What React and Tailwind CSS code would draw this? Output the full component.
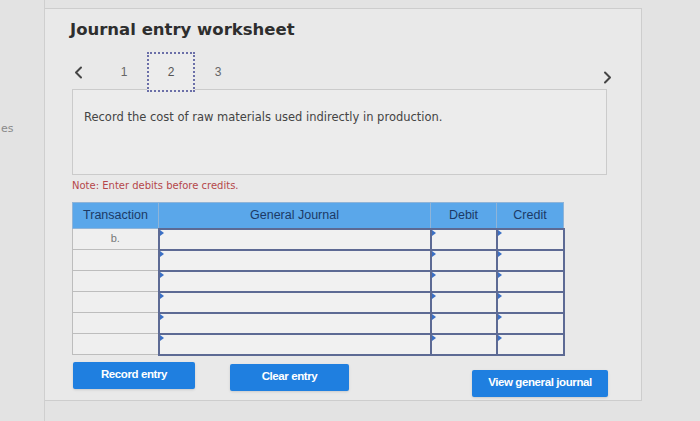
import React from 'react'

const ROWS = ['b.', '', '', '', '', '']

function Marker() {
  return (
    <span className="absolute left-0 top-0 w-0 h-0 border-t-[3px] border-b-[3px] border-l-[4px] border-t-transparent border-b-transparent border-l-[#3b6fc4]" />
  )
}

function EntryCell({ className = '' }) {
  return (
    <td className={`relative border-2 border-[#5d6a94] bg-[#f1f1f1] ${className}`}>
      <Marker />
    </td>
  )
}

function Btn({ children, className = '' }) {
  return (
    <button
      className={`h-[27px] bg-[#1f7fe0] rounded-[2px] text-white font-bold text-[11.5px] tracking-[-0.4px] shadow-sm ${className}`}
      style={{ fontFamily: '"Liberation Sans Narrow", "Liberation Sans", Arial, sans-serif' }}
    >
      {children}
    </button>
  )
}

function Chevron({ dir }) {
  return (
    <svg width="9" height="13" viewBox="0 0 9 13" fill="none" stroke="#454545" strokeWidth="2" strokeLinecap="round" strokeLinejoin="round">
      {dir === 'left' ? <path d="M7 1.5 L2 6.5 L7 11.5" /> : <path d="M2 1.5 L7 6.5 L2 11.5" />}
    </svg>
  )
}

export default function App() {
  return (
    <div className="w-[700px] h-[421px] bg-[#e3e3e3] flex overflow-hidden" style={{ fontFamily: '"DejaVu Sans", Verdana, sans-serif' }}>
      {/* left strip */}
      <div className="w-[45px] shrink-0 border-r border-[#cfcfcf] pt-[115px] pl-[1px]">
        <span className="text-[11px] text-[#8a8a8a]">es</span>
      </div>

      {/* worksheet panel */}
      <div className="mt-[8px] w-[597px] h-[393px] shrink-0 border-t border-r border-b border-[#cdcdcd] bg-[#e9e9e9] pl-[25px] pr-[20px] pt-[10px]">
        <h1 className="text-[16.5px] font-bold text-[#2e2e2e] leading-[22px]">Journal entry worksheet</h1>

        {/* step nav */}
        <div className="relative mt-[11px] flex items-center h-[40px] pr-[9px]">
          <div className="flex items-center -ml-[15px]">
            <span className="w-[46px] flex justify-center"><Chevron dir="left" /></span>
            <span className="w-[46px] text-center text-[12px] text-[#666]" style={{ fontFamily: '"Liberation Sans", Arial, sans-serif' }}>1</span>
            <span className="w-[48px] h-[40px] flex items-center justify-center text-[12px] text-[#555] border-2 border-dotted border-[#6b6fa8] bg-[#ececec] relative z-10" style={{ fontFamily: '"Liberation Sans", Arial, sans-serif' }}>2</span>
            <span className="w-[46px] text-center text-[12px] text-[#666]" style={{ fontFamily: '"Liberation Sans", Arial, sans-serif' }}>3</span>
          </div>
          <span className="ml-auto mt-[10px] flex"><Chevron dir="right" /></span>
        </div>

        {/* description */}
        <div className="-mt-[3px] ml-[2px] w-[535px] h-[86px] border border-[#cbcbcb] bg-[#ececec] px-[11px] pt-[19px]">
          <p className="text-[11.5px] text-[#444]">Record the cost of raw materials used indirectly in production.</p>
        </div>

        <p className="mt-[3px] ml-[2px] text-[10px] text-[#b5474a]">Note: Enter debits before credits.</p>

        {/* journal table */}
        <table className="mt-[9px] ml-[2px] w-[491px] border-collapse table-fixed" style={{ fontFamily: '"Liberation Sans", Arial, sans-serif' }}>
          <colgroup>
            <col className="w-[86px]" />
            <col className="w-[272px]" />
            <col className="w-[66px]" />
            <col className="w-[67px]" />
          </colgroup>
          <thead>
            <tr className="h-[26px] bg-[#5aa7ea] text-[12.5px] text-[#1c3a66]">
              <th className="font-normal border border-[#8fb4d8]">Transaction</th>
              <th className="font-normal border border-[#8fb4d8]">General Journal</th>
              <th className="font-normal border border-[#8fb4d8]">Debit</th>
              <th className="font-normal border border-[#8fb4d8]">Credit</th>
            </tr>
          </thead>
          <tbody>
            {ROWS.map((t, i) => (
              <tr key={i} className="h-[21px]">
                <td className="border border-[#bdbdbd] bg-[#efefef] text-center text-[11px] text-[#777] align-top pt-[1px]">{t}</td>
                <EntryCell />
                <EntryCell />
                <EntryCell />
              </tr>
            ))}
          </tbody>
        </table>

        {/* actions */}
        <div className="mt-[6px] flex items-start">
          <Btn className="w-[122px] ml-[3px]">Record entry</Btn>
          <Btn className="w-[119px] ml-[35px] mt-[2px]">Clear entry</Btn>
          <Btn className="w-[136px] ml-[123px] mt-[8px]">View general journal</Btn>
        </div>
      </div>
    </div>
  )
}
